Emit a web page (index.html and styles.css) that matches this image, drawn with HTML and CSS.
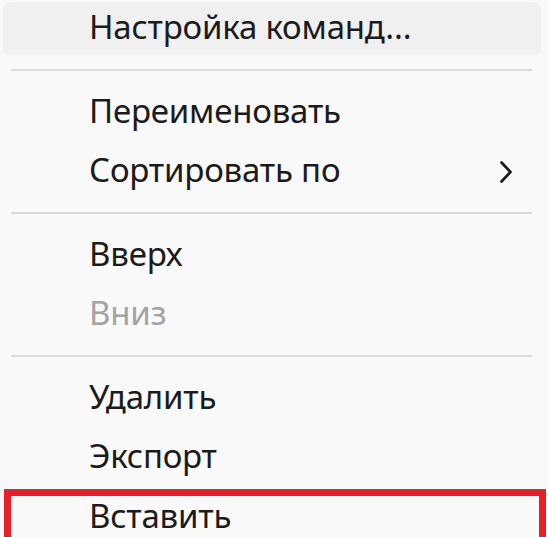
FILE: index.html
```html
<!DOCTYPE html>
<html lang="ru">
<head>
  <meta charset="UTF-8">
  <meta name="viewport" content="width=device-width, initial-scale=1.0">
  <title>Меню</title>
  <link rel="stylesheet" href="styles.css">
</head>
<body>

  <div class="menu">
    <div class="item hover">Настройка команд...</div>
    <div class="sep"></div>
    <div class="item">Переименовать</div>
    <div class="item">
      Сортировать по
      <svg class="arrow" width="14" height="24" viewBox="0 0 14 24">
        <path d="M2.5 2.5 L11.5 12 L2.5 21.5" fill="none" stroke="#1b1b1b" stroke-width="2.7" stroke-linecap="round" stroke-linejoin="round"/>
      </svg>
    </div>
    <div class="sep"></div>
    <div class="item">Вверх</div>
    <div class="item disabled">Вниз</div>
    <div class="sep"></div>
    <div class="item">Удалить</div>
    <div class="item">Экспорт</div>
    <div class="item marked">Вставить</div>
  </div>

</body>
</html>
```

FILE: styles.css
```css
* {
  margin: 0;
  padding: 0;
  box-sizing: border-box;
}

body {
  background-color: #f9f9f9;
  font-family: "Noto Sans", "Open Sans", sans-serif;
  color: #1b1b1b;
  overflow: hidden;
}

.menu {
  display: flex;
  flex-direction: column;
}

.item {
  position: relative;
  display: flex;
  align-items: center;
  margin: 2px 7px 4.5px 3px;
  padding: 0 28px 3px 86px;
  font-size: 33px;
  letter-spacing: -0.2px;
  line-height: 50px;
  border-radius: 8px;
  white-space: nowrap;
}

.item.hover {
  background-color: #f0f0f0;
}

.item.disabled {
  color: #a3a3a3;
}

.arrow {
  margin-left: auto;
  margin-top: 3px;
}

.sep {
  height: 2px;
  margin: 9px 16px 13px 11px;
  background-color: #dadada;
}

/* красная рамка поверх последнего пункта */
.item.marked::after {
  content: "";
  position: absolute;
  top: -1.5px;
  left: 1px;
  right: -5px;
  height: 48px;
  border: 7px solid #e81e28;
}
```
